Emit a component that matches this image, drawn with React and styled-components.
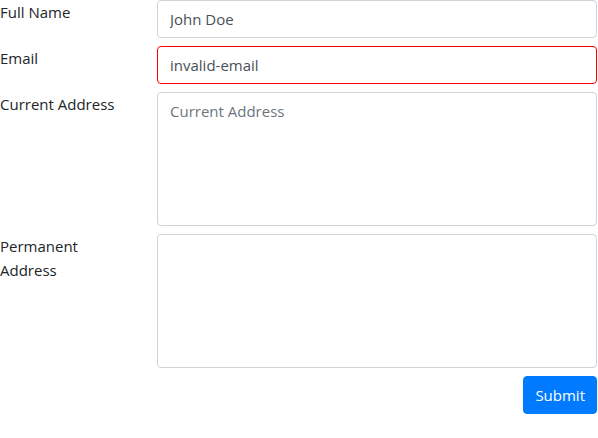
import React from "react";
import styled, { createGlobalStyle } from "styled-components";

const GlobalStyle = createGlobalStyle`
  body {
    margin: 0;
    background: #fff;
    font-family: "Open Sans", "Noto Sans", sans-serif;
    font-size: 16px;
    line-height: 1.5;
    color: #212529;
  }
  * { box-sizing: border-box; }
`;

const Form = styled.form`
  width: 598px;
  padding-right: 1px;
`;

const Row = styled.div`
  display: flex;
  margin-bottom: 8px;
`;

const Label = styled.label`
  width: 157px;
  flex-shrink: 0;
  padding-right: 30px;
  line-height: 24px;
  font-size: 15px;
`;

const Field = styled.div`
  flex: 1;
`;

const Input = styled.input`
  display: block;
  width: 100%;
  height: 38px;
  padding: 6px 12px;
  font: inherit;
  font-size: 15px;
  line-height: 24px;
  color: #495057;
  background: #fff;
  border: 1px solid ${(p) => (p.$invalid ? "#ff0000" : "#ced4da")};
  border-radius: 4px;
  outline: none;
  &::placeholder { color: #6c757d; }
`;

const TextArea = styled.textarea`
  display: block;
  width: 100%;
  height: 134px;
  padding: 6px 12px;
  font: inherit;
  font-size: 15px;
  line-height: 24px;
  color: #495057;
  border: 1px solid #ced4da;
  border-radius: 4px;
  resize: none;
  outline: none;
  &::placeholder { color: #6c757d; }
`;

const Actions = styled.div`
  display: flex;
  justify-content: flex-end;
`;

const Button = styled.button`
  height: 38px;
  padding: 6px 11px;
  font: inherit;
  font-size: 15px;
  line-height: 24px;
  color: #fff;
  background: #007bff;
  border: 1px solid #007bff;
  border-radius: 4px;
`;

export default function App() {
  return (
    <>
      <GlobalStyle />
      <Form onSubmit={(e) => e.preventDefault()}>
        <Row>
          <Label>Full Name</Label>
          <Field>
            <Input placeholder="Full Name" defaultValue="John Doe" />
          </Field>
        </Row>
        <Row>
          <Label>Email</Label>
          <Field>
            <Input $invalid placeholder="name@example.com" defaultValue="invalid-email" />
          </Field>
        </Row>
        <Row>
          <Label>Current Address</Label>
          <Field>
            <TextArea placeholder="Current Address" />
          </Field>
        </Row>
        <Row>
          <Label>Permanent Address</Label>
          <Field>
            <TextArea />
          </Field>
        </Row>
        <Actions>
          <Button type="submit">Submit</Button>
        </Actions>
      </Form>
    </>
  );
}
